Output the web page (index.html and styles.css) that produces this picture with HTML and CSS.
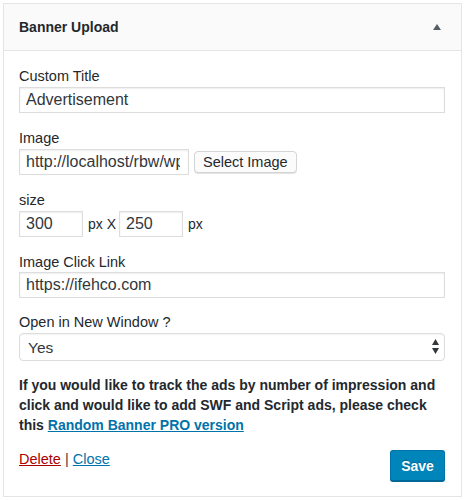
FILE: index.html
```html
<!DOCTYPE html>
<html>
<head>
<meta charset="utf-8">
<link rel="stylesheet" href="styles.css">
</head>
<body>
<div class="widget">
  <div class="widget-top">
    <h3 class="widget-title">Banner Upload</h3>
    <span class="toggle">
      <svg width="8" height="6" viewBox="0 0 8 6"><path d="M0 6 L4 0 L8 6 Z" fill="#555d66"/></svg>
    </span>
  </div>
  <div class="widget-inside">
    <div class="field">
      <label class="field-label">Custom Title</label>
      <input class="text-input wide" type="text" value="Advertisement">
    </div>
    <div class="field">
      <label class="field-label">Image</label>
      <div class="row">
        <input class="text-input url" type="text" value="http://localhost/rbw/wp-content/uploads/banner.jpg">
        <button class="button">Select Image</button>
      </div>
    </div>
    <div class="field">
      <label class="field-label">size</label>
      <div class="row">
        <input class="text-input small" type="text" value="300">
        <span class="unit">px X</span>
        <input class="text-input small" type="text" value="250">
        <span class="unit">px</span>
      </div>
    </div>
    <div class="field field-tight">
      <label class="field-label">Image Click Link</label>
      <input class="text-input wide" type="text" value="https://ifehco.com">
    </div>
    <div class="field field-tight">
      <label class="field-label">Open in New Window ?</label>
      <div class="select-wrap">
        <select class="select">
          <option>Yes</option>
          <option>No</option>
        </select>
        <svg class="select-arrow" width="7" height="15" viewBox="0 0 7 15"><path d="M0 6 L3.5 0 L7 6 Z M0 9 L3.5 15 L7 9 Z" fill="#32373c"/></svg>
      </div>
    </div>
    <p class="notice">If you would like to track the ads by number of impression and click and would like to add SWF and Script ads, please check this <a class="link" href="#">Random Banner PRO version</a></p>
    <div class="actions">
      <div class="links"><a class="delete" href="#">Delete</a> | <a class="link" href="#">Close</a></div>
      <button class="button-primary">Save</button>
    </div>
  </div>
</div>
</body>
</html>
```
FILE: styles.css
```css
html, body {
  margin: 0;
  padding: 0;
  background: #ffffff;
}

body {
  font-family: "Liberation Sans", Arial, sans-serif;
  font-size: 14px;
  line-height: 20px;
  color: #23282d;
}

.widget {
  box-sizing: border-box;
  width: 459px;
  margin: 3px 0 0 3px;
  border: 1px solid #e5e5e5;
  box-shadow: 0 1px 1px rgba(0, 0, 0, 0.04);
  background: #fff;
}

.widget-top {
  display: flex;
  align-items: center;
  justify-content: space-between;
  padding: 13px 15px;
  background: #fafafa;
  border-bottom: 1px solid #e5e5e5;
}

.widget-title {
  margin: 0;
  font-size: 14px;
  line-height: 20px;
  font-weight: bold;
  color: #23282d;
}

.toggle {
  display: flex;
  margin-right: 5px;
}

.widget-inside {
  padding: 15px 16px 15px 15px;
}

.field {
  margin-bottom: 15px;
}

.field-tight {
  margin-bottom: 14px;
}

.field-label {
  display: block;
  font-size: 14.5px;
  line-height: 20px;
  color: #23282d;
}

.text-input {
  box-sizing: border-box;
  height: 26px;
  margin: 1px 0 0;
  padding: 1px 6px;
  border: 1px solid #ddd;
  box-shadow: inset 0 1px 2px rgba(0, 0, 0, 0.07);
  background: #fff;
  color: #32373c;
  font-family: "Liberation Sans", Arial, sans-serif;
  font-size: 16px;
  outline: none;
  border-radius: 0;
}

.wide {
  display: block;
  width: 100%;
}

.field-tight .wide {
  margin-top: 0;
}

.row {
  display: flex;
  align-items: center;
  margin-top: 1px;
}

.row .text-input {
  margin-top: 0;
}

.url {
  width: 170px;
  padding-right: 8px;
}

.small {
  width: 64px;
}

.unit {
  margin: 0 3px 0 5px;
  font-size: 14px;
  color: #23282d;
}

.button {
  box-sizing: border-box;
  height: 22px;
  margin-left: 5px;
  padding: 0 8px;
  border: 1px solid #d4d4d4;
  border-radius: 4px;
  background: #fbfbfb;
  box-shadow: 0 1px 0 #e4e4e4;
  color: #23282d;
  font-family: "Liberation Sans", Arial, sans-serif;
  font-size: 14.5px;
  line-height: 20px;
}

.select-wrap {
  position: relative;
  margin-top: 1px;
}

.select {
  box-sizing: border-box;
  display: block;
  width: 100%;
  height: 28px;
  padding: 0 30px 0 8px;
  border: 1px solid #ddd;
  border-radius: 4px;
  background: #fff;
  box-shadow: inset 0 1px 2px rgba(0, 0, 0, 0.05);
  color: #32373c;
  font-family: "Liberation Sans", Arial, sans-serif;
  font-size: 15.5px;
  -webkit-appearance: none;
  appearance: none;
  outline: none;
}

.select-arrow {
  position: absolute;
  right: 6px;
  top: 6px;
}

.notice {
  margin: 0;
  font-weight: bold;
  line-height: 20px;
  color: #23282d;
}

.link {
  color: #0073aa;
  text-decoration: underline;
}

.delete {
  color: #a00;
  text-decoration: underline;
}

.actions {
  display: flex;
  justify-content: space-between;
  align-items: flex-start;
  margin-top: 14px;
}

.links {
  font-size: 14.5px;
  line-height: 20px;
  color: #444;
}

.button-primary {
  box-sizing: border-box;
  height: 31px;
  width: 55px;
  margin-top: 1px;
  padding: 0;
  border: 1px solid #0073aa;
  border-bottom-color: #006799;
  border-radius: 3px;
  background: #0085ba;
  box-shadow: 0 1px 0 #006799;
  color: #fff;
  font-family: "Liberation Sans", Arial, sans-serif;
  font-size: 14px;
  font-weight: bold;
  text-shadow: 0 -1px 1px #006799;
}
```
